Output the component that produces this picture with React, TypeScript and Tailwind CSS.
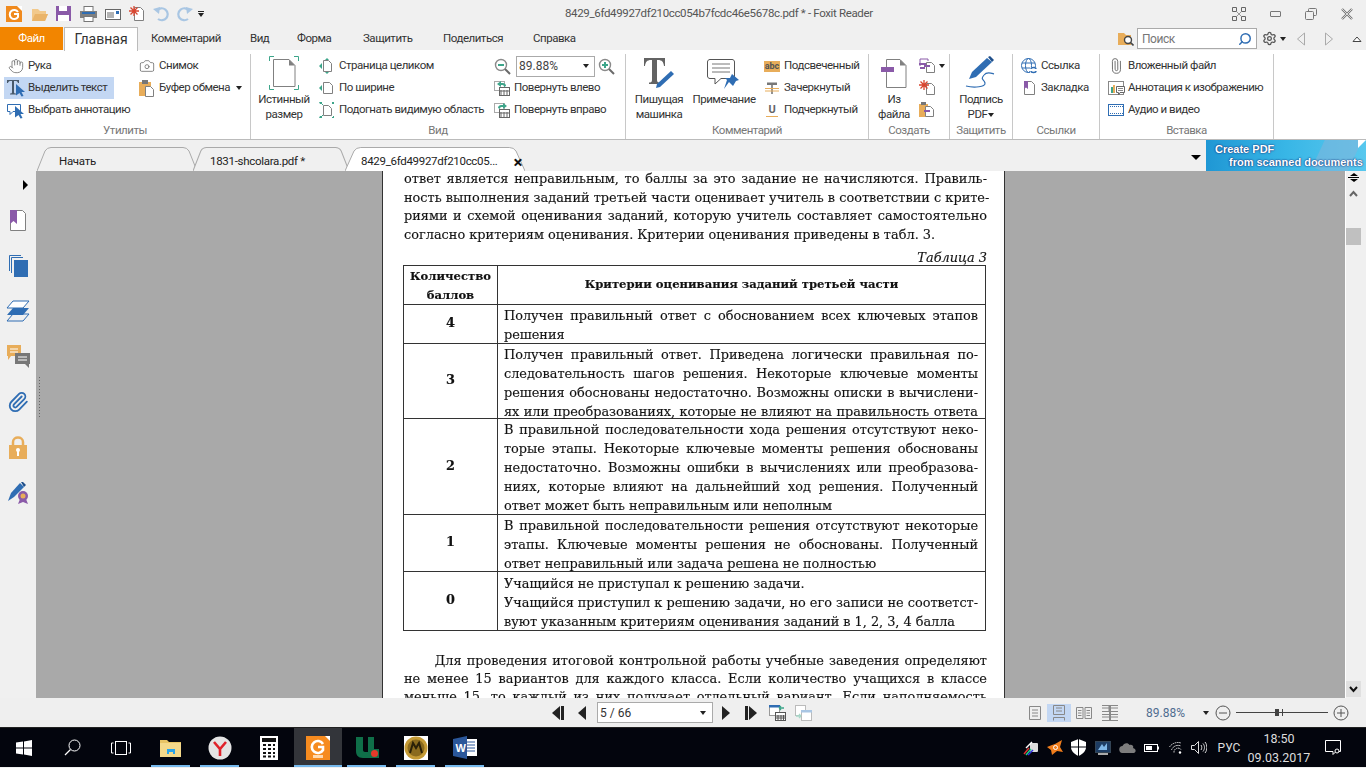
import type { ReactNode } from "react"
import { Hand, Camera, Settings, Search, Paperclip } from "lucide-react"

const BLUE = "#2f6db3"
const ORANGE = "#e8ad5a"
const PURPLE = "#8a5aa8"
const TEAL = "#3da58a"
const GRAY = "#808080"

function Ic({ w = 16, h = 16, children }: { w?: number; h?: number; children: ReactNode }) {
  return (
    <svg width={w} height={h} viewBox={`0 0 ${w} ${h}`} fill="none" className="shrink-0">
      {children}
    </svg>
  )
}

const Doc = ({ x = 0, y = 0, w = 10, h = 13, s = GRAY }: { x?: number; y?: number; w?: number; h?: number; s?: string }) => (
  <path d={`M${x + 0.5} ${y + 0.5}H${x + w - 3.5}L${x + w - 0.5} ${y + 3.5}V${y + h - 0.5}H${x + 0.5}Z`} stroke={s} fill="#fff" />
)

const Arrow = ({ x = 0, y = 0, c = BLUE }: { x?: number; y?: number; c?: string }) => (
  <path d={`M${x} ${y}L${x + 9} ${y + 8}H${x + 5.5}L${x + 7.5} ${y + 12}L${x + 5.5} ${y + 12.5}L${x + 3.5} ${y + 9}L${x} ${y + 11.5}Z`} fill={c} />
)

const TextIcon = () => (
  <Ic w={20} h={18}>
    <path d="M1 1H13V4H12C11.5 2.5 11 2 9 2H8V13C8 14 8.5 14.5 10 14.5V15.5H4V14.5C5.5 14.5 6 14 6 13V2H5C3 2 2.5 2.5 2 4H1Z" fill="#4a5a6a" />
    <Arrow x={10} y={5} />
  </Ic>
)
const AnnotIcon = () => (
  <Ic w={20} h={18}>
    <path d="M1.5 3.5H14.5V10.5H7L4 13.5V10.5H1.5Z" stroke={BLUE} fill="#fff" />
    <Arrow x={9} y={5} />
  </Ic>
)
const ClipIcon = () => (
  <Ic w={18} h={18}>
    <rect x="1" y="3" width="12" height="14" fill={ORANGE} />
    <rect x="4" y="1" width="6" height="4" fill="#777" />
    <Doc x={7} y={7} w={9} h={11} />
  </Ic>
)
const Bigdoc = () => (
  <Ic w={30} h={34}>
    <path d="M0.5 5V0.5H5M25 0.5H29.5V5M0.5 29V33.5H5M25 33.5H29.5V29" stroke={TEAL} />
    <path d="M4.5 3.5H20L26 9.5V30.5H4.5Z" stroke={GRAY} fill="#fff" />
    <path d="M20 3.5L26 9.5H20Z" fill={GRAY} />
  </Ic>
)
const FitPage = () => (
  <Ic>
    <Doc x={4} y={2} w={9} h={12} />
    <path d="M8 0L10 2H6ZM8 16L6 14H10ZM0 8L3 5V11Z" fill={TEAL} />
  </Ic>
)
const FitWidth = () => (
  <Ic>
    <Doc x={4} y={2} w={10} h={12} />
    <path d="M0 8L3 5V11Z" fill={TEAL} />
  </Ic>
)
const FitVisible = () => (
  <Ic w={16} h={18}>
    <Doc x={4} y={4} w={9} h={11} />
    <path d="M0 1L3 1V2H2V3H1ZM15 1H13V2H14V3H15ZM0 17H3V16H2V15H1ZM15 17H13V16H14V15H15Z" fill={TEAL} />
    <path d="M1 1L4 4M15 1L13 3M1 17L4 14" stroke={TEAL} />
  </Ic>
)
const ZoomIcon = ({ plus }: { plus?: boolean }) => (
  <Ic w={17} h={17}>
    <circle cx="7" cy="7" r="5.5" stroke="#8a8a8a" fill="#fff" strokeWidth="1.4" />
    <path d="M11 11L16 16" stroke="#6a6a6a" strokeWidth="2" />
    <path d={plus ? "M4 7H10M7 4V10" : "M4 7H10"} stroke={TEAL} strokeWidth="2" />
  </Ic>
)
const RotateIcon = ({ right }: { right?: boolean }) => (
  <Ic>
    <rect x="0.5" y="1.5" width="10" height="9" stroke="#aaa" fill="#fff" />
    <rect x="5.5" y="7.5" width="10" height="8" stroke="#666" fill="#fff" />
    <path d="M7 10V15M10 10V15M13 10V15M6 11H15" stroke="#666" />
    <path d={right ? "M4 6C4 3.5 6 3 9 3V1L13 4L9 7V5C7 5 6 5 6 7Z" : "M12 6C12 3.5 10 3 7 3V1L3 4L7 7V5C9 5 10 5 10 7Z"} fill={TEAL} />
  </Ic>
)
const TypewriterIcon = () => (
  <Ic w={32} h={32}>
    <path d="M1 1H22V9H21C20.5 5 19 3 15 3H14V23C14 25 15 25.5 17 25.5V27H6V25.5C8 25.5 9 25 9 23V3H8C4 3 2.5 5 2 9H1Z" fill="#636363" />
    <path d="M28 14L31 17L17 30L13 31L14 27Z" fill={BLUE} />
  </Ic>
)
const NoteIcon = () => (
  <Ic w={33} h={31}>
    <path d="M3 1.5H25C26.5 1.5 27.5 2.5 27.5 4V18C27.5 19.5 26.5 20.5 25 20.5H14L8 26V20.5H3C1.5 20.5 0.5 19.5 0.5 18V4C0.5 2.5 1.5 1.5 3 1.5Z" stroke="#555" fill="#fff" />
    <path d="M5 6H23M5 10H23M5 14H23" stroke="#777" />
    <path d="M25 16L32 22L29 23L26 28L22 24L17 31L20 22L18 20L23 20Z" fill={BLUE} />
  </Ic>
)
const AbcIcon = () => (
  <span className="w-[16px] h-[11px] bg-[#e8ad5a] text-[9px] leading-[11px] font-bold text-[#555] text-center shrink-0 tracking-normal">abc</span>
)
const StrikeIcon = () => (
  <Ic w={14} h={14}>
    <path d="M2 1.5H12V4H7.8V13H6.2V4H2Z" fill="#777" />
    <path d="M0 7.5H14M0 10H14" stroke={ORANGE} />
  </Ic>
)
const UnderIcon = () => (
  <span className="w-[12px] border-b border-[#e8ad5a] text-[11px] leading-[13px] font-bold text-[#666] text-center shrink-0">U</span>
)
const FileFromIcon = () => (
  <Ic w={26} h={29}>
    <path d="M5.5 0.5H19L25 6.5V28.5H5.5Z" stroke={GRAY} fill="#fff" />
    <path d="M19 0.5L25 6.5H19Z" fill={GRAY} />
    <rect x="0" y="8" width="13" height="5" fill={PURPLE} />
  </Ic>
)
const SmallCombine = () => (
  <Ic w={18} h={16}>
    <path d="M1 1H9V3M1 8V1" stroke={PURPLE} />
    <rect x="0" y="5" width="7" height="2" fill={PURPLE} />
    <path d="M1 10H6" stroke={PURPLE} strokeWidth="2" />
    <Doc x={7} y={4} w={9} h={11} />
    <rect x="5" y="7" width="6" height="2" fill={PURPLE} />
  </Ic>
)
const Star = ({ x, y }: { x: number; y: number }) => (
  <path d={`M${x} ${y - 5}V${y + 5}M${x - 5} ${y}H${x + 5}M${x - 3.5} ${y - 3.5}L${x + 3.5} ${y + 3.5}M${x + 3.5} ${y - 3.5}L${x - 3.5} ${y + 3.5}`} stroke="#d9452f" strokeWidth="1.3" />
)
const SmallNew = () => (
  <Ic w={18} h={16}>
    <Doc x={7} y={3} w={9} h={12} />
    <Star x={5} y={5} />
  </Ic>
)
const SmallClip = () => (
  <Ic w={18} h={16}>
    <rect x="0" y="2" width="9" height="13" fill={ORANGE} />
    <rect x="2" y="0" width="5" height="3" fill="#777" />
    <Doc x={6} y={4} w={9} h={11} />
    <rect x="5" y="8" width="6" height="2" fill={PURPLE} />
  </Ic>
)
const SignIcon = () => (
  <Ic w={32} h={34}>
    <path d="M22 2L27 6L11 21L4 23L7 16Z" fill={BLUE} />
    <path d="M23 1L25 0L29 4L27 6Z" fill="#1f4f8a" />
    <path d="M1 30C9 32 21 31 20 27C19 23 15 24 19 19C22 15 26 17 29 18" stroke={BLUE} strokeWidth="1.2" />
  </Ic>
)
const LinkIcon = () => (
  <Ic w={17} h={16}>
    <circle cx="7.5" cy="7.5" r="7" stroke={BLUE} fill="#fff" />
    <ellipse cx="7.5" cy="7.5" rx="3" ry="7" stroke={BLUE} />
    <path d="M1 5H14M1 10H14" stroke={BLUE} />
    <rect x="9" y="9" width="7" height="6" fill="#fff" />
    <path d="M10 11C10 9 15 9 15 11M10 13C10 15 15 15 15 13" stroke={BLUE} strokeWidth="1.4" />
  </Ic>
)
const BookmarkIcon = () => (
  <Ic w={13} h={16}>
    <Doc x={1} y={1} w={11} h={14} />
    <path d="M1 1H5V9L3 7.5L1 9Z" fill={PURPLE} />
  </Ic>
)
const ImgNote = () => (
  <Ic w={17} h={16}>
    <rect x="0.5" y="1.5" width="15" height="13" stroke="#888" fill="#fff" />
    <rect x="3" y="7" width="2" height="6" fill={TEAL} />
    <rect x="5" y="5" width="2" height="8" fill={ORANGE} />
    <path d="M8.5 6.5H16.5V12.5H12L10.5 15V12.5H8.5Z" stroke="#666" fill="#fff" />
    <path d="M10 8.5H15M10 10.5H15" stroke="#888" />
  </Ic>
)
const Film = () => (
  <Ic w={16} h={12}>
    <rect x="0.5" y="0.5" width="15" height="11" stroke={BLUE} fill="#fff" />
    <path d="M0 2.5H16M0 9.5H16" stroke={BLUE} strokeWidth="1" strokeDasharray="1 1" />
  </Ic>
)

function Row({ icon, text, active, arrow }: { icon: ReactNode; text: string; active?: boolean; arrow?: boolean }) {
  return (
    <div className={`h-[22px] flex items-center whitespace-nowrap ${active ? "bg-[#c3d7f3]" : ""}`}>
      <span className="w-[24px] flex justify-center shrink-0">{icon}</span>
      <span>{text}</span>
      {arrow && <span className="ml-[6px] border-x-[3.5px] border-x-transparent border-t-[4px] border-t-[#222]" />}
    </div>
  )
}

function Big({ icon, lines }: { icon: ReactNode; lines: ReactNode[] }) {
  return (
    <div className="flex flex-col items-center shrink-0">
      <div className="h-[36px] flex items-center shrink-0">{icon}</div>
      <div className="mt-[1px] leading-[15px] text-center whitespace-nowrap">
        {lines.map((l, i) => (
          <div key={i}>{l}</div>
        ))}
      </div>
    </div>
  )
}

function Group({ label, width, children }: { label: string; width: string; children: ReactNode }) {
  return (
    <div className={`${width} h-[85px] mt-[4px] border-r border-[#c8c8c8] flex flex-col shrink-0`}>
      <div className="h-[67px] pt-px flex shrink-0">{children}</div>
      <div className="h-[18px] leading-[19px] text-center text-[#777]">{label}</div>
    </div>
  )
}

const QAT = () => (
  <div className="flex items-center h-[27px] w-[210px] pl-[6px] gap-[8px] shrink-0">
    <Ic w={16} h={17}>
      <rect y="1" width="16" height="16" fill="#f08a1d" />
      <path d="M11 1L16 1V6Z" fill="#fff" />
      <path d="M12 7A4.5 4.5 0 1 0 12 12V9H8" stroke="#fff" strokeWidth="2" />
    </Ic>
    <span className="ml-[2px]">
      <Ic w={16} h={16}>
        <path d="M0 3H6L8 5H14V8H16L13 15H0Z" fill="#f2c98b" />
        <path d="M3 8H16L13 15H0Z" fill="#eab469" />
      </Ic>
    </span>
    <Ic w={16} h={16}>
      <rect width="15" height="15" fill={PURPLE} />
      <rect x="3" y="0" width="8" height="5" fill="#fff" />
      <rect x="2" y="9" width="11" height="6" fill="#fff" />
    </Ic>
    <Ic w={17} h={16}>
      <rect x="4" y="0.5" width="9" height="5" stroke="#777" fill="#fff" />
      <rect x="0" y="5" width="17" height="7" fill="#808080" />
      <rect x="2" y="6" width="13" height="2" fill={BLUE} />
      <rect x="4" y="10.5" width="9" height="5" stroke="#777" fill="#fff" />
    </Ic>
    <Ic w={16} h={14}>
      <rect x="0.5" y="2.5" width="15" height="10" stroke="#666" fill="#fff" />
      <rect x="11" y="4" width="3" height="3" fill={BLUE} />
      <path d="M2 6H9M2 8H9M2 10H9" stroke="#666" />
    </Ic>
    <Ic w={16} h={16}>
      <Doc x={5} y={1} w={10} h={14} />
      <Star x={5} y={5} />
    </Ic>
    <Ic w={16} h={16}>
      <path d="M4 4.5A6 6 0 1 1 5 13" stroke="#a9c6e3" strokeWidth="2.2" />
      <path d="M0 3L7 1L6 8Z" fill="#a9c6e3" />
    </Ic>
    <Ic w={16} h={16}>
      <path d="M12 4.5A6 6 0 1 0 11 13" stroke="#a9c6e3" strokeWidth="2.2" />
      <path d="M16 3L9 1L10 8Z" fill="#a9c6e3" />
    </Ic>
    <div className="flex flex-col items-center gap-[1px] -ml-[3px]">
      <span className="w-[6px] h-px bg-[#222]" />
      <span className="border-x-[3.5px] border-x-transparent border-t-[4px] border-t-[#222]" />
    </div>
  </div>
)

const WinControls = () => (
  <div className="flex items-center h-[27px] shrink-0 text-[#777] pr-[1px]">
    <span className="w-[36px] flex justify-center">
      <Ic w={14} h={14}>
        <path d="M0.5 0.5H4.5V4.5H0.5ZM9.5 0.5H13.5V4.5H9.5ZM0.5 9.5H4.5V13.5H0.5ZM9.5 9.5H13.5V13.5H9.5Z" stroke="#666" />
        <path d="M5 5L7 7M9 5L7 7M5 9L7 7M9 9L7 7" stroke="#999" />
      </Ic>
    </span>
    <span className="w-[36px] flex justify-center">
      <span className="w-[11px] h-[6px] rounded-[1px] border border-[#777]" />
    </span>
    <span className="w-[36px] flex justify-center">
      <Ic w={12} h={12}>
        <rect x="3.5" y="0.5" width="8" height="7" rx="1" stroke="#777" />
        <rect x="0.5" y="3.5" width="8" height="8" rx="1" stroke="#777" fill="#f0f0f0" />
      </Ic>
    </span>
    <span className="w-[36px] flex justify-center">
      <Ic w={12} h={12}>
        <path d="M1 1L11 11M11 1L1 11" stroke="#777" strokeWidth="2.4" />
        <path d="M1 1L11 11M11 1L1 11" stroke="#f0f0f0" strokeWidth="0.8" />
      </Ic>
    </span>
  </div>
)

const menu = [
  { t: "Комментарий", w: "w-[99px]" },
  { t: "Вид", w: "w-[47px]" },
  { t: "Форма", w: "w-[66px]" },
  { t: "Защитить", w: "w-[80px]" },
  { t: "Поделиться", w: "w-[90px]" },
  { t: "Справка", w: "w-[60px]" },
]

function Tab({ text, width, pad, active, close }: { text: string; width: string; pad: string; active?: boolean; close?: boolean }) {
  return (
    <div className={`relative h-[24px] ${width} shrink-0 flex items-center mr-[-4px]`}>
      <svg className="absolute inset-0 w-full h-full" viewBox="0 0 160 24" preserveAspectRatio="none">
        <path d="M0 24L8 4Q10 0.5 14 0.5H146Q150 0.5 152 4L160 24" fill={active ? "#fff" : "#f0f0f0"} stroke="#aaa" vectorEffect="non-scaling-stroke" />
      </svg>
      <span className={`relative ${pad} pt-[5px] whitespace-nowrap text-[#222] tracking-[-0.3px]`}>{text}</span>
      {close && <span className="absolute right-[3px] top-[7px] text-[#111] text-[17px] leading-[17px] font-bold">×</span>}
    </div>
  )
}

const Sidebar = () => {
  const icons = [
    <Ic w={18} h={22} key="b">
      <Doc x={1} y={1} w={16} h={21} />
      <path d="M1 1H8V15L4.5 12L1 15Z" fill={PURPLE} />
    </Ic>,
    <Ic w={19} h={22} key="p">
      <path d="M0.5 16V0.5H12" stroke={BLUE} />
      <path d="M2.5 18V2.5H14" stroke={BLUE} />
      <rect x="5" y="5" width="14" height="17" fill={BLUE} />
    </Ic>,
    <Ic w={24} h={22} key="l">
      <path d="M7 1H23L17 8H1Z" stroke={BLUE} fill="#fff" />
      <path d="M7 8H23L17 15H1Z" fill={BLUE} />
      <path d="M7 14H23L17 21H1Z" stroke={BLUE} />
    </Ic>,
    <Ic w={23} h={23} key="c">
      <path d="M0 0H14V11H4L1 15V11H0Z" fill={ORANGE} />
      <path d="M3 4H11M3 7H11" stroke="#fff" />
      <path d="M8 8H23V19H22V23L18 19H8Z" fill="#777" />
      <path d="M11 12H20M11 15H20" stroke="#fff" />
    </Ic>,
    <Paperclip key="a" size={22} color={BLUE} strokeWidth={2} />,
    <Ic w={18} h={23} key="k">
      <path d="M4 10V6C4 0 14 0 14 6V10" stroke={ORANGE} strokeWidth="2.5" />
      <rect y="9" width="18" height="14" fill={ORANGE} />
      <circle cx="9" cy="14" r="2" fill="#fff" />
      <rect x="8" y="14" width="2" height="6" fill="#fff" />
    </Ic>,
    <Ic w={21} h={22} key="s">
      <path d="M12 1L16 5L6 15L0 19L3 11Z" fill={BLUE} />
      <path d="M13 0L15 0L18 3L16 5Z" fill="#1f4f8a" />
      <path d="M12 17L10 22L15 20L20 22L18 17Z" fill={PURPLE} />
      <circle cx="15" cy="14" r="5" fill={PURPLE} />
      <circle cx="15" cy="14" r="2.5" fill={ORANGE} />
    </Ic>,
  ]
  return (
    <div className="w-[36px] bg-[#f0f0f0] shrink-0 flex flex-col">
      <div className="h-[26.5px] flex justify-end items-start pt-[9px] pr-[8px]">
        <span className="border-y-[5px] border-y-transparent border-l-[5px] border-l-black" />
      </div>
      {icons.map((ic) => (
        <div key={ic.key} className="h-[45.5px] flex items-center justify-center">
          {ic}
        </div>
      ))}
    </div>
  )
}

type Cell = { score: string; height: string; pad: string; lines: string[]; loose?: number[] }

const rows: Cell[] = [
  { score: "4", height: "h-[39px]", pad: "pt-[1px]", lines: ["Получен правильный ответ с обоснованием всех ключевых этапов", "решения"], loose: [1] },
  {
    score: "3",
    height: "h-[75px]",
    pad: "pt-px",
    lines: [
      "Получен правильный ответ. Приведена логически правильная по-",
      "следовательность шагов решения. Некоторые ключевые моменты",
      "решения обоснованы недостаточно. Возможны описки в вычислени-",
      "ях или преобразованиях, которые не влияют на правильность ответа",
    ],
  },
  {
    score: "2",
    height: "h-[96px]",
    pad: "pt-px",
    lines: [
      "В правильной последовательности хода решения отсутствуют неко-",
      "торые этапы. Некоторые ключевые моменты решения обоснованы",
      "недостаточно. Возможны ошибки в вычислениях или преобразова-",
      "ниях, которые влияют на дальнейший ход решения. Полученный",
      "ответ может быть неправильным или неполным",
    ],
    loose: [4],
  },
  {
    score: "1",
    height: "h-[57px]",
    pad: "pt-px",
    lines: [
      "В правильной последовательности решения отсутствуют некоторые",
      "этапы. Ключевые моменты решения не обоснованы. Полученный",
      "ответ неправильный или задача решена не полностью",
    ],
    loose: [2],
  },
  {
    score: "0",
    height: "h-[58px]",
    pad: "pt-[2px]",
    lines: [
      "Учащийся не приступал к решению задачи.",
      "Учащийся приступил к решению задачи, но его записи не соответст-",
      "вуют указанным критериям оценивания заданий в 1, 2, 3, 4 балла",
    ],
    loose: [0, 2],
  },
]

const J = ({ children }: { children: string }) => <div className="[text-align-last:justify] whitespace-nowrap">{children}</div>
const L = ({ children }: { children: string }) => <div className="whitespace-nowrap">{children}</div>

const Page = () => (
  <div className="ml-[346px] w-[623px] h-[530px] -mt-[1px] bg-white border-x border-[#333] pl-[21px] pr-[17px] shrink-0 text-[#111] font-['DejaVu_Serif',serif] text-[12.9px] tracking-normal leading-[18.7px] blur-[0.3px] [-webkit-text-stroke:0.15px_#222]">
    <J>ответ является неправильным, то баллы за это задание не начисляются. Правиль-</J>
    <J>ность выполнения заданий третьей части оценивает учитель в соответствии с крите-</J>
    <J>риями и схемой оценивания заданий, которую учитель составляет самостоятельно</J>
    <L>согласно критериям оценивания. Критерии оценивания приведены в табл. 3.</L>
    <div className="text-right italic mt-[4px] h-[16px]">Таблица 3</div>
    <div className="w-[583px] -ml-[1px] border border-[#333]">
      <div className="flex h-[39px] border-b border-[#333] font-bold text-[11.6px]">
        <div className="w-[94px] shrink-0 border-r border-[#333] text-center pt-px">
          <div>Количество</div>
          <div>баллов</div>
        </div>
        <div className="flex-1 flex items-center justify-center">Критерии оценивания заданий третьей части</div>
      </div>
      {rows.map((r, i) => (
        <div key={r.score} className={`flex ${r.height} ${i < rows.length - 1 ? "border-b border-[#333]" : ""}`}>
          <div className="w-[94px] shrink-0 border-r border-[#333] flex items-center justify-center font-bold">{r.score}</div>
          <div className={`flex-1 min-w-0 pl-[6px] pr-[7px] leading-[19px] tracking-[-0.04px] ${r.pad}`}>
            {r.lines.map((t, n) => (r.loose?.includes(n) ? <L key={n}>{t}</L> : <J key={n}>{t}</J>))}
          </div>
        </div>
      ))}
    </div>
    <div className="mt-[21px] leading-[18px]">
      <J>{"\u00a0\u00a0\u00a0\u00a0\u00a0\u00a0Для проведения итоговой контрольной работы учебные заведения определяют"}</J>
      <J>не менее 15 вариантов для каждого класса. Если количество учащихся в классе</J>
      <J>меньше 15, то каждый из них получает отдельный вариант. Если наполняемость</J>
    </div>
  </div>
)

const Scrollbar = () => (
  <div className="w-[21px] bg-[#f0f0f0] border-l border-white shrink-0 flex flex-col pr-[5px]">
    <div className="h-[11px] mt-[1px] flex flex-col items-center justify-center">
      <span className="border-x-[4px] border-x-transparent border-b-[3px] border-b-black" />
      <span className="w-[11px] h-px bg-black my-[1px]" />
      <span className="border-x-[4px] border-x-transparent border-t-[3px] border-t-black" />
    </div>
    <div className="h-[15px] mt-[3px] flex justify-center items-center">
      <Ic w={9} h={7}>
        <path d="M1 6L4.5 2L8 6" stroke="#666" strokeWidth="2" />
      </Ic>
    </div>
    <div className="h-[17px] mt-[27px] bg-[#c0c0c0]" />
    <div className="mt-auto h-[16px] mb-[1px] bg-[#e0e0e0] flex justify-center items-center">
      <Ic w={9} h={7}>
        <path d="M1 1L4.5 5L8 1" stroke="#111" strokeWidth="2" />
      </Ic>
    </div>
  </div>
)

const Tri = ({ left }: { left?: boolean }) => (
  <span className={`border-y-[7px] border-y-transparent ${left ? "border-r-[8px] border-r-[#222]" : "border-l-[8px] border-l-[#222]"}`} />
)

const PageViewIcon = ({ kind }: { kind: number }) => (
  <Ic w={16} h={16}>
    {kind === 0 && <path d="M2.5 1.5H13.5V14.5H2.5ZM5 5H11M5 8H11M5 11H11" stroke="#888" />}
    {kind === 1 && <path d="M2.5 0.5H13.5V9.5H2.5ZM5 3H11M5 6H11M2.5 15.5V12.5H13.5V15.5" stroke="#888" />}
    {kind === 2 && <path d="M0.5 2.5H7V13.5H0.5ZM9 2.5H15.5V13.5H9ZM2 5.5H5.5M2 8H5.5M2 10.5H5.5M10.5 5.5H14M10.5 8H14M10.5 10.5H14" stroke="#888" />}
    {kind === 3 && <path d="M0 0.5H7V6.5H0M9 0.5H16M9 3H16M9 6.5H16M0 3H7M0 9.5H7M0 12H7M0 15.5H7M9 9.5H16M9 12H16M9 15.5H16M7.5 0V16M8.5 0V16" stroke="#888" />}
  </Ic>
)

const StatusBar = () => (
  <div className="h-[29px] bg-[#efefef] flex items-center shrink-0">
    <div className="w-[552px] shrink-0" />
    <span className="flex items-center gap-[1px] w-[26px]">
      <Tri left />
      <span className="w-[3px] h-[14px] bg-[#222]" />
    </span>
    <span className="w-[19px] flex"><Tri left /></span>
    <div className="w-[116px] h-[21px] border border-[#aaa] bg-white flex items-center justify-between pl-[2px] pr-[6px] text-[12px] text-[#333] shrink-0 tracking-normal">
      <span>5 / 66</span>
      <span className="border-x-[3.5px] border-x-transparent border-t-[4px] border-t-[#222]" />
    </div>
    <span className="w-[9px]" />
    <span className="w-[23px] flex"><Tri /></span>
    <span className="flex items-center gap-[1px] w-[24px]">
      <span className="w-[3px] h-[14px] bg-[#222]" />
      <Tri />
    </span>
    <Ic w={17} h={16}>
      <rect x="0.5" y="0.5" width="10" height="10" stroke="#999" fill="#fff" />
      <rect y="0" width="11" height="2.5" fill={BLUE} />
      <rect x="6.5" y="7.5" width="10" height="8" stroke="#555" fill="#fff" />
      <path d="M9 10V15M12 10V15M14.5 10V15M7 11H16M7 13H16" stroke="#555" />
      <path d="M15 3H10M10 3L12 1M10 3L12 5" stroke={TEAL} strokeWidth="1.3" />
    </Ic>
    <span className="w-[9px]" />
    <Ic w={17} h={16}>
      <rect x="0.5" y="0.5" width="10" height="10" stroke="#bbb" fill="#fff" />
      <rect x="6.5" y="6.5" width="10" height="9" stroke="#bbb" fill="#fff" />
      <rect x="6" y="5" width="11" height="2.5" fill="#a9c6e3" />
      <path d="M1 11H6M6 11L4 9M6 11L4 13" stroke="#a7d8c8" strokeWidth="1.3" />
    </Ic>
    <div className="w-[215px] shrink-0" />
    <PageViewIcon kind={0} />
    <span className="w-[4px]" />
    <span className="w-[24px] h-[18px] bg-[#c3d7f3] flex items-center justify-center"><PageViewIcon kind={1} /></span>
    <span className="w-[5px]" />
    <PageViewIcon kind={2} />
    <span className="w-[10px]" />
    <PageViewIcon kind={3} />
    <span className="w-[28px]" />
    <span className="text-[#4f6d8f] text-[12px] w-[57px] whitespace-nowrap tracking-normal">89.88%</span>
    <span className="border-x-[3.5px] border-x-transparent border-t-[4px] border-t-[#222]" />
    <span className="w-[6px]" />
    <Ic w={16} h={16}>
      <circle cx="8" cy="8" r="7" stroke="#555" />
      <path d="M4 8H12" stroke="#555" />
    </Ic>
    <span className="w-[5px]" />
    <div className="w-[92px] h-px bg-[#444] relative shrink-0">
      <span className="absolute left-[39px] -top-[3px] w-[4px] h-[7px] bg-[#444]" />
      <span className="absolute left-[46px] -top-[3px] w-px h-[7px] bg-[#444]" />
    </div>
    <span className="w-[5px]" />
    <Ic w={16} h={16}>
      <circle cx="8" cy="8" r="7" stroke="#555" />
      <path d="M4 8H12M8 4V12" stroke="#555" />
    </Ic>
  </div>
)

const TbSlot = ({ w = "w-[49px]", bar, active, children }: { w?: string; bar?: boolean; active?: boolean; children: ReactNode }) => (
  <div className={`${w} h-full flex items-center justify-center relative shrink-0 ${active ? "bg-[#33353a]" : ""}`}>
    {children}
    {bar && <span className={`absolute bottom-0 h-[2px] bg-[#76b9ed] ${active ? "inset-x-0" : "inset-x-[5px]"}`} />}
  </div>
)

const Taskbar = () => (
  <div className="h-[40px] bg-[#03050d] border-t border-[#222] flex items-center shrink-0 text-white tracking-normal">
    <TbSlot w="w-[48px]">
      <Ic w={16} h={16}>
        <path d="M0 2.5L7 1.5V7.5H0ZM8 1.4L16 0V7.5H8ZM0 8.5H7V14.5L0 13.5ZM8 8.5H16V16L8 14.6Z" fill="#fff" />
      </Ic>
    </TbSlot>
    <TbSlot w="w-[48px]">
      <Ic w={17} h={17}>
        <circle cx="10.5" cy="6.5" r="5.5" stroke="#fff" />
        <path d="M6.5 10.5L1 16" stroke="#fff" strokeWidth="1.3" />
      </Ic>
    </TbSlot>
    <TbSlot w="w-[50px]">
      <Ic w={20} h={14}>
        <rect x="4.5" y="0.5" width="11" height="13" stroke="#fff" />
        <path d="M2.5 2H0.5V12H2.5M17.5 2H19.5V12H17.5" stroke="#fff" />
      </Ic>
    </TbSlot>
    <TbSlot bar>
      <Ic w={22} h={18}>
        <path d="M0 1H7L9 3H21V5H0Z" fill="#e8c465" />
        <rect y="4" width="21" height="14" fill="#f4d98a" />
        <rect x="7" y="10" width="8" height="5" fill="#2aa4e8" />
        <rect x="9" y="13" width="4" height="5" fill="#f4d98a" />
      </Ic>
    </TbSlot>
    <TbSlot bar>
      <Ic w={24} h={24}>
        <circle cx="12" cy="12" r="11.5" fill="#e4e4e4" />
        <path d="M6 6L12 13L18 6M12 13V20" stroke="#e0222a" strokeWidth="2.6" />
      </Ic>
    </TbSlot>
    <TbSlot w="w-[50px]">
      <Ic w={18} h={24}>
        <rect width="18" height="24" fill="#fff" />
        <rect x="2" y="2" width="14" height="4" fill="#111" />
        <path d="M3 9H6M8 9H11M13 9H15M3 13H6M8 13H11M13 13H15M3 17H6M8 17H11M13 17H15M3 20.5H6M8 20.5H11M13 20.5H15" stroke="#111" strokeWidth="2" />
      </Ic>
    </TbSlot>
    <TbSlot w="w-[48px]" bar active>
      <Ic w={24} h={24}>
        <rect width="24" height="24" fill="#f68b1f" />
        <path d="M19 0H24V5Z" fill="#fff" />
        <path d="M17 8A6 6 0 1 0 17 14V11H12" stroke="#fff" strokeWidth="2.6" />
        <rect x="7" y="19" width="10" height="3" fill="#ffd9ae" />
      </Ic>
    </TbSlot>
    <TbSlot bar>
      <Ic w={24} h={21}>
        <path d="M1 0H8V13C8 15 10 15 11 15H13V0H19V12H24V21H8C3 21 1 18 1 14Z" fill="#0f6f49" />
        <circle cx="19.5" cy="16.5" r="3.5" fill="#e33a2a" />
      </Ic>
    </TbSlot>
    <TbSlot bar>
      <Ic w={24} h={24}>
        <rect width="24" height="24" fill="#fff" />
        <circle cx="12" cy="12" r="11.5" fill="#c49a35" />
        <circle cx="12" cy="12" r="8.5" fill="#8a6a1e" />
        <path d="M6 17L9 7L12 12L15 7L18 17" stroke="#2a2008" strokeWidth="2" />
      </Ic>
    </TbSlot>
    <TbSlot bar>
      <Ic w={24} h={23}>
        <rect x="10" y="3" width="14" height="17" fill="#fff" />
        <path d="M12 6H22M12 9H22M12 12H22M12 15H22" stroke="#2b579a" />
        <path d="M0 3L14 0V23L0 20Z" fill="#2b579a" />
        <text x="2.5" y="16" fontSize="11" fontWeight="700" fill="#fff" fontFamily="Liberation Sans, sans-serif">W</text>
      </Ic>
    </TbSlot>
    <div className="flex-1" />
    <div className="flex items-center h-full shrink-0">
      <span className="w-[24px] flex justify-center">
        <Ic w={16} h={16}>
          <rect x="7" y="3" width="8" height="9" rx="1" fill="#ddd" />
          <path d="M1 14L6 8" stroke="#d33" strokeWidth="1.5" />
          <path d="M3 15L8 9" stroke="#2c8" strokeWidth="1.5" />
          <path d="M5 15L10 10" stroke="#33d" strokeWidth="1.5" />
          <path d="M3 8L9 2" stroke="#fff" strokeWidth="1.5" />
        </Ic>
      </span>
      <span className="w-[23px] flex justify-center">
        <Ic w={16} h={15}>
          <path d="M8 4L15 0L13 7L16 12L10 11L5 15L4 10L0 7L5 5Z" fill="#f07d1c" />
          <circle cx="8.5" cy="7.5" r="2" stroke="#fff" />
        </Ic>
      </span>
      <span className="w-[25px] flex justify-center">
        <Ic w={15} h={17}>
          <path d="M7.5 0L15 3V8C15 12 12 15 7.5 17C3 15 0 12 0 8V3Z" fill="#fff" />
          <path d="M7.5 0V17M0 8H15" stroke="#03050d" />
        </Ic>
      </span>
      <span className="w-[24px] flex justify-center">
        <Ic w={16} h={14}>
          <rect x="0.5" y="0.5" width="15" height="11" fill="#1d3c63" stroke="#345" />
          <path d="M3 9L7 3L9 6L12 2V9Z" fill="#7fb7e8" />
          <rect x="3" y="12" width="10" height="2" fill="#aaa" />
        </Ic>
      </span>
      <span className="w-[24px] flex justify-center">
        <Ic w={17} h={11}>
          <path d="M4 11A3.5 3.5 0 0 1 3.5 4C4.5 1 9 0 10.5 3C13 2 15 4 14 6C16 6.5 17 8 16.5 9.5C16 10.5 15 11 14 11Z" fill="#7d7d7d" />
        </Ic>
      </span>
      <span className="w-[25px] flex justify-center">
        <Ic w={15} h={8}>
          <rect x="0.5" y="0.5" width="13" height="7" stroke="#fff" />
          <rect x="2" y="2" width="6" height="4" fill="#fff" />
          <rect x="14" y="2.5" width="1" height="3" fill="#fff" />
        </Ic>
      </span>
      <span className="w-[23px] flex justify-center">
        <Ic w={13} h={12}>
          <path d="M0.5 5A10 10 0 0 1 12 1M2.5 8A7 7 0 0 1 12 4M5 10.5A4 4 0 0 1 12 7.5" stroke="#ddd" strokeDasharray="1.6 0.6" />
          <circle cx="11" cy="10.5" r="1.2" fill="#fff" />
        </Ic>
      </span>
      <span className="w-[24px] flex justify-center">
        <Ic w={16} h={13}>
          <path d="M0.5 4.5H3.5L7.5 0.5V12.5L3.5 8.5H0.5Z" stroke="#ddd" />
          <path d="M10 4C11 5.5 11 7.5 10 9M12 2.5C14 5 14 8 12 10.5M14 1C16.5 4 16.5 9 14 12" stroke="#ddd" />
        </Ic>
      </span>
      <span className="w-[36px] text-center text-[12px] text-[#ddd]">РУС</span>
      <div className="w-[64px] text-center text-[12.5px] leading-[19px] text-[#ddd]">
        <div>18:50</div>
        <div>09.03.2017</div>
      </div>
      <span className="w-[44px] flex justify-center">
        <Ic w={16} h={15}>
          <path d="M0.5 0.5H15.5V11.5H11L8 14.5V11.5H0.5Z" stroke="#fff" />
          <circle cx="12" cy="11" r="2" stroke="#fff" fill="#03050d" />
        </Ic>
      </span>
      <span className="w-[11px]" />
    </div>
  </div>
)

export default function App() {
  return (
    <div className="w-[1366px] h-[768px] overflow-hidden flex flex-col bg-[#f0f0f0] font-['Roboto',sans-serif] text-[11.5px] tracking-[-0.47px] text-[#333]">
      {/* заголовок окна */}
      <div className="h-[27px] flex items-center shrink-0">
        <QAT />
        <div className="flex-1 pl-[355px] text-[11.5px] tracking-[-0.35px] text-[#555] whitespace-nowrap">8429_6fd49927df210cc054b7fcdc46e5678c.pdf * - Foxit Reader</div>
        <WinControls />
      </div>

      {/* вкладки ленты */}
      <div className="h-[24px] flex items-stretch shrink-0">
        <div className="w-[63px] h-[23px] bg-[#f28500] text-white flex items-center justify-center shrink-0">Файл</div>
        <div className="w-[74px] ml-px h-[24px] bg-white border-x border-t border-[#bbb] flex items-center justify-center text-[14px] tracking-normal text-[#333] relative z-10 shrink-0">Главная</div>
        <div className="flex pl-[13px] border-b border-[#bbb] flex-1 items-center h-[24px]">
          {menu.map((m) => (
            <span key={m.t} className={`${m.w} shrink-0 whitespace-nowrap`}>
              {m.t}
            </span>
          ))}
          <div className="ml-auto flex items-center">
            <span className="mr-[3px]">
              <Ic w={16} h={15}>
                <path d="M0 2H6L8 4H13V14H0Z" fill={ORANGE} />
                <circle cx="10" cy="9" r="3.5" stroke="#444" fill="#fff" strokeWidth="1.4" />
                <path d="M12.5 11.5L15.5 14.5" stroke="#444" strokeWidth="1.6" />
              </Ic>
            </span>
            <div className="w-[120px] h-[21px] border border-[#aaa] bg-white flex items-center justify-between px-[4px] text-[#777] text-[12px]">
              <span>Поиск</span>
              <Search size={14} color={BLUE} strokeWidth={2.5} className="-scale-x-100" />
            </div>
            <span className="ml-[5px]"><Settings size={15} color="#555" /></span>
            <span className="ml-[3px] border-x-[3.5px] border-x-transparent border-t-[4px] border-t-[#222]" />
            <span className="ml-[10px]">
              <Ic w={10} h={14}><path d="M8.5 1L1.5 7L8.5 13Z" stroke="#aaa" fill="#f0f0f0" /></Ic>
            </span>
            <span className="ml-[18px]">
              <Ic w={10} h={14}><path d="M1.5 1L8.5 7L1.5 13Z" stroke="#aaa" fill="#f0f0f0" /></Ic>
            </span>
            <span className="ml-[18px] mr-[4px]">
              <Ic w={10} h={8}><path d="M1 6.5L5 2L9 6.5H1Z" stroke="#444" fill="#fff" /></Ic>
            </span>
          </div>
        </div>
      </div>

      {/* лента */}
      <div className="h-[90px] bg-white border-b border-[#bbb] flex shrink-0 -mt-px">
        <Group label="Утилиты" width="w-[251px]">
          <div className="w-[135px] pl-[4px]">
            <Row icon={<Hand size={16} color="#777" strokeWidth={1.3} />} text="Рука" />
            <div className="w-[110px]">
              <Row icon={<TextIcon />} text="Выделить текст" active />
            </div>
            <Row icon={<AnnotIcon />} text="Выбрать аннотацию" />
          </div>
          <div className="flex-1">
            <Row icon={<Camera size={16} color="#777" strokeWidth={1.3} />} text="Снимок" />
            <Row icon={<ClipIcon />} text="Буфер обмена" arrow />
          </div>
        </Group>
        <Group label="Вид" width="w-[375px]">
          <div className="w-[64px] pl-[2px] flex justify-center"><Big icon={<Bigdoc />} lines={["Истинный", "размер"]} /></div>
          <div className="w-[179px]">
            <Row icon={<FitPage />} text="Страница целиком" />
            <Row icon={<FitWidth />} text="По ширине" />
            <Row icon={<FitVisible />} text="Подогнать видимую область" />
          </div>
          <div className="flex-1">
            <div className="h-[22px] flex items-center">
              <ZoomIcon />
              <div className="ml-[5px] w-[79px] h-[21px] border border-[#aaa] flex items-center justify-between pl-[2px] pr-[5px] text-[12px] text-[#444] tracking-normal">
                <span>89.88%</span>
                <span className="border-x-[3.5px] border-x-transparent border-t-[4px] border-t-[#222]" />
              </div>
              <span className="ml-[3px]"><ZoomIcon plus /></span>
            </div>
            <div className="h-[22px] flex items-center gap-[4px]"><RotateIcon />Повернуть влево</div>
            <div className="h-[22px] flex items-center gap-[4px]"><RotateIcon right />Повернуть вправо</div>
          </div>
        </Group>
        <Group label="Комментарий" width="w-[243px]">
          <div className="w-[66px] flex justify-center"><Big icon={<TypewriterIcon />} lines={["Пишущая", "машинка"]} /></div>
          <div className="w-[64px] flex justify-center"><Big icon={<NoteIcon />} lines={["Примечание"]} /></div>
          <div className="pl-[4px] flex-1">
            <Row icon={<AbcIcon />} text="Подсвеченный" />
            <Row icon={<StrikeIcon />} text="Зачеркнутый" />
            <Row icon={<UnderIcon />} text="Подчеркнутый" />
          </div>
        </Group>
        <Group label="Создать" width="w-[81px]">
          <div className="w-[50px] flex justify-center"><Big icon={<FileFromIcon />} lines={["Из", "файла"]} /></div>
          <div>
            <div className="h-[22px] flex items-center gap-[2px]"><SmallCombine /><span className="border-x-[3px] border-x-transparent border-t-[4px] border-t-[#222]" /></div>
            <div className="h-[22px] flex items-center"><SmallNew /></div>
            <div className="h-[22px] flex items-center"><SmallClip /></div>
          </div>
        </Group>
        <Group label="Защитить" width="w-[63px]">
          <div className="w-full flex justify-center">
            <Big
              icon={<SignIcon />}
              lines={[
                "Подпись",
                <span key="pdf" className="inline-flex items-center gap-[1px]">PDF<span className="border-x-[3px] border-x-transparent border-t-[4px] border-t-[#222]" /></span>,
              ]}
            />
          </div>
        </Group>
        <Group label="Ссылки" width="w-[87px]">
          <div className="pl-[4px]">
            <Row icon={<LinkIcon />} text="Ссылка" />
            <Row icon={<BookmarkIcon />} text="Закладка" />
          </div>
        </Group>
        <Group label="Вставка" width="w-[174px]">
          <div className="pl-[4px]">
            <Row icon={<Paperclip size={16} color="#666" strokeWidth={1.3} className="-rotate-45" />} text="Вложенный файл" />
            <Row icon={<ImgNote />} text="Аннотация к изображению" />
            <Row icon={<Film />} text="Аудио и видео" />
          </div>
        </Group>
      </div>

      {/* вкладки документов */}
      <div className="h-[31px] flex items-end shrink-0">
        <div className="w-[37px] shrink-0" />
        <Tab text="Начать" width="w-[160px]" pad="pl-[22px]" />
        <Tab text="1831-shcolara.pdf *" width="w-[156px]" pad="pl-[17px]" />
        <Tab text="8429_6fd49927df210cc05..." width="w-[180px]" pad="pl-[16px]" active close />
        <div className="flex-1 self-center flex justify-end pr-[5px] pt-[4px]">
          <span className="border-x-[5px] border-x-transparent border-t-[5px] border-t-black" />
        </div>
        <div className="w-[160px] h-[31px] shrink-0 bg-gradient-to-r from-[#1f97d4] via-[#38b6e6] to-[#58c8ee] text-white font-bold text-[11px] tracking-normal leading-[13px] pt-[3px] pl-[9px] [text-shadow:0_0_2px_#14317a,0_0_1px_#14317a] font-['Liberation_Sans',sans-serif] relative overflow-hidden">
          <span className="absolute right-[12px] -top-[8px] w-[34px] h-[44px] bg-[#7fb6dc]/60 rotate-[25deg]" />
          <div className="relative">Create PDF</div>
          <div className="relative pl-[14px] whitespace-nowrap">from scanned documents</div>
          <span className="absolute right-0 top-0 border-l-[8px] border-l-white border-b-[8px] border-b-transparent" />
        </div>
      </div>

      {/* рабочая область */}
      <div className="h-[527px] flex shrink-0 overflow-hidden">
        <Sidebar />
        <div className="flex-1 bg-[#a9a9a9] overflow-hidden relative">
          <Page />
          <span className="absolute left-[2px] top-[205px] h-[43px] w-[3px] [background-image:radial-gradient(#666_40%,transparent_45%)] [background-size:3px_3px]" />
        </div>
        <Scrollbar />
      </div>

      <StatusBar />
      <Taskbar />
    </div>
  )
}
